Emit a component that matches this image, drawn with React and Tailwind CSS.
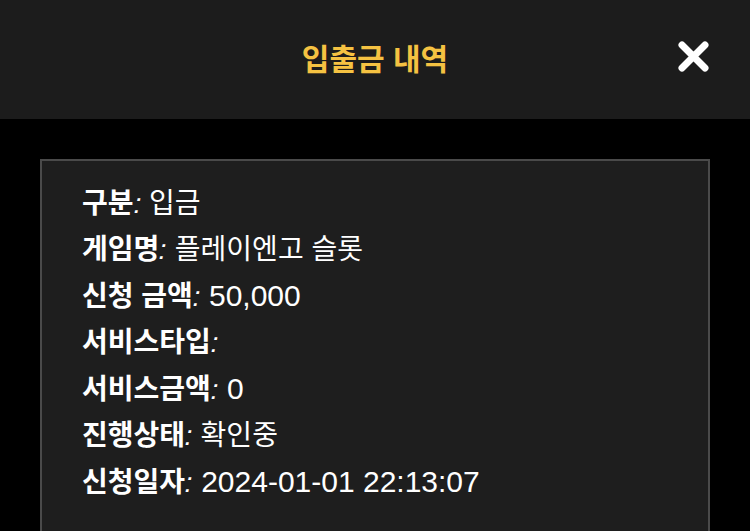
import React from 'react';

const rows = [
    { label: '구분', value: '입금' },
    { label: '게임명', value: '플레이엔고 슬롯' },
    { label: '신청 금액', value: '50,000', num: true },
    { label: '서비스타입', value: '' },
    { label: '서비스금액', value: '0', num: true },
    { label: '진행상태', value: '확인중' },
    { label: '신청일자', value: '2024-01-01 22:13:07', num: true }
];

const App = () => {
    return (
        <div
            className="min-h-screen bg-black"
            style={{ fontFamily: '"Liberation Sans", "Noto Sans CJK KR", sans-serif' }}
        >
            <div className="relative flex h-[119px] items-center justify-center bg-[#1c1c1c]">
                <h1 className="text-[30px] font-bold text-[#f5c242]">입출금 내역</h1>
                <button className="absolute right-[40px] top-[40px] h-[33px] w-[33px]">
                    <svg viewBox="0 0 33 33" className="h-full w-full">
                        <path
                            d="M5 5 L28 28 M28 5 L5 28"
                            stroke="#fff"
                            strokeWidth="7"
                            strokeLinecap="round"
                        />
                    </svg>
                </button>
            </div>

            <div className="mx-10 mt-10 min-h-[420px] border-2 border-[#4a4a4a] bg-[#1e1e1e] px-10 pt-[20px] pb-8">
                {rows.map((row) => (
                    <div key={row.label} className="text-[28px] leading-[46px] text-white">
                        <span className="font-bold">{row.label}</span>
                        <i className="not-italic inline-block -skew-x-12">:</i>
                        {row.value && (
                            <span className={row.num ? 'text-[30px]' : ''}> {row.value}</span>
                        )}
                    </div>
                ))}
            </div>
        </div>
    );
};

export default App;
